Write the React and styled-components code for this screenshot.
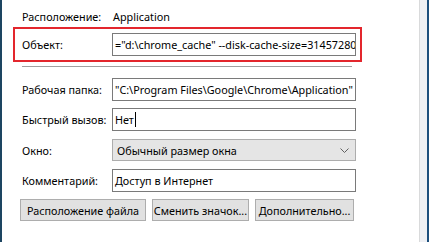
import React from 'react';
import styled, { createGlobalStyle } from 'styled-components';

const GlobalStyle = createGlobalStyle`
  html, body {
    margin: 0;
    padding: 0;
    background: #ffffff;
  }
  body {
    font-family: "Noto Sans", "DejaVu Sans", sans-serif;
    font-size: 10.8px;
    color: #000000;
  }
`;

const Window = styled.div`
  display: flex;
  height: 242px;
  width: 429px;
  overflow: hidden;
`;

const EdgeLeft = styled.div`
  width: 2px;
  background: #1d4561;
`;

const EdgeRight = styled.div`
  width: 2px;
  background: #1c4f7d;
`;

const Strip = styled.div`
  width: 7px;
  border-left: 1px solid #d9dadb;
  background: #eef0f4;
`;

const Panel = styled.div`
  flex: 1;
  padding: 9px 0 0 11px;
  display: flex;
  flex-direction: column;
  align-items: flex-start;
`;

const InfoRow = styled.div`
  display: grid;
  grid-template-columns: 91px auto;
  padding-left: 9px;
  height: 16px;
  line-height: 16px;
  white-space: nowrap;
`;

const Highlight = styled.div`
  box-sizing: border-box;
  margin-top: 2px;
  width: 349px;
  border: 2px solid #e3262d;
  padding: 4px 4px 4px 7px;
  display: grid;
  grid-template-columns: 90px 244px;
  align-items: center;
`;

const Separator = styled.div`
  margin: 4px 0 0 9px;
  width: 330px;
  height: 1px;
  background: #a0a0a0;
`;

const Fields = styled.div`
  margin-top: 11px;
  padding-left: 9px;
  display: flex;
  flex-direction: column;
`;

const FieldRow = styled.div`
  display: grid;
  grid-template-columns: 90px 244px;
  align-items: start;
  height: ${p => p.$h || 30}px;
`;

const Label = styled.div`
  height: 23px;
  line-height: 23px;
  white-space: nowrap;
`;

const Edit = styled.div`
  box-sizing: border-box;
  height: 23px;
  border: 1px solid #7a7a7a;
  background: #ffffff;
  padding: 0 2px;
  display: flex;
  align-items: center;
  white-space: nowrap;
  overflow: hidden;
`;

const Caret = styled.span`
  display: inline-block;
  width: 1px;
  height: 15px;
  margin-left: 1px;
  background: #000000;
`;

const Select = styled.div`
  box-sizing: border-box;
  height: 22px;
  border: 1px solid #adadad;
  background: #e5e5e5;
  padding: 0 6px 0 4px;
  display: flex;
  align-items: center;
  justify-content: space-between;
  white-space: nowrap;
`;

const Buttons = styled.div`
  display: flex;
  gap: 6px;
  padding-left: 7px;
`;

const Button = styled.div`
  box-sizing: border-box;
  width: ${p => p.$w}px;
  height: 22px;
  border: 1px solid #adadad;
  background: #e1e1e1;
  display: flex;
  align-items: center;
  justify-content: center;
  white-space: nowrap;
`;

const Chevron = () => (
  <svg width="9" height="5" viewBox="0 0 9 5">
    <path d="M0.5 0.5 L4.5 4.5 L8.5 0.5" fill="none" stroke="#606060" strokeWidth="1" />
  </svg>
);

export default function App() {
  return (
    <>
      <GlobalStyle />
      <Window>
        <EdgeLeft />
        <Panel>
          <InfoRow>
            <span>Расположение:</span>
            <span>Application</span>
          </InfoRow>
          <Highlight>
            <Label>Объект:</Label>
            <Edit>="d:\chrome_cache" --disk-cache-size=31457280</Edit>
          </Highlight>
          <Separator />
          <Fields>
            <FieldRow $h={30}>
              <Label>Рабочая папка:</Label>
              <Edit>"C:\Program Files\Google\Chrome\Application"</Edit>
            </FieldRow>
            <FieldRow $h={31}>
              <Label>Быстрый вызов:</Label>
              <Edit>Нет<Caret /></Edit>
            </FieldRow>
            <FieldRow $h={30}>
              <Label>Окно:</Label>
              <Select>
                <span>Обычный размер окна</span>
                <Chevron />
              </Select>
            </FieldRow>
            <FieldRow $h={30}>
              <Label>Комментарий:</Label>
              <Edit>Доступ в Интернет</Edit>
            </FieldRow>
          </Fields>
          <Buttons>
            <Button $w={126}>Расположение файла</Button>
            <Button $w={97}>Сменить значок...</Button>
            <Button $w={99}>Дополнительно...</Button>
          </Buttons>
        </Panel>
        <Strip />
        <EdgeRight />
      </Window>
    </>
  );
}
